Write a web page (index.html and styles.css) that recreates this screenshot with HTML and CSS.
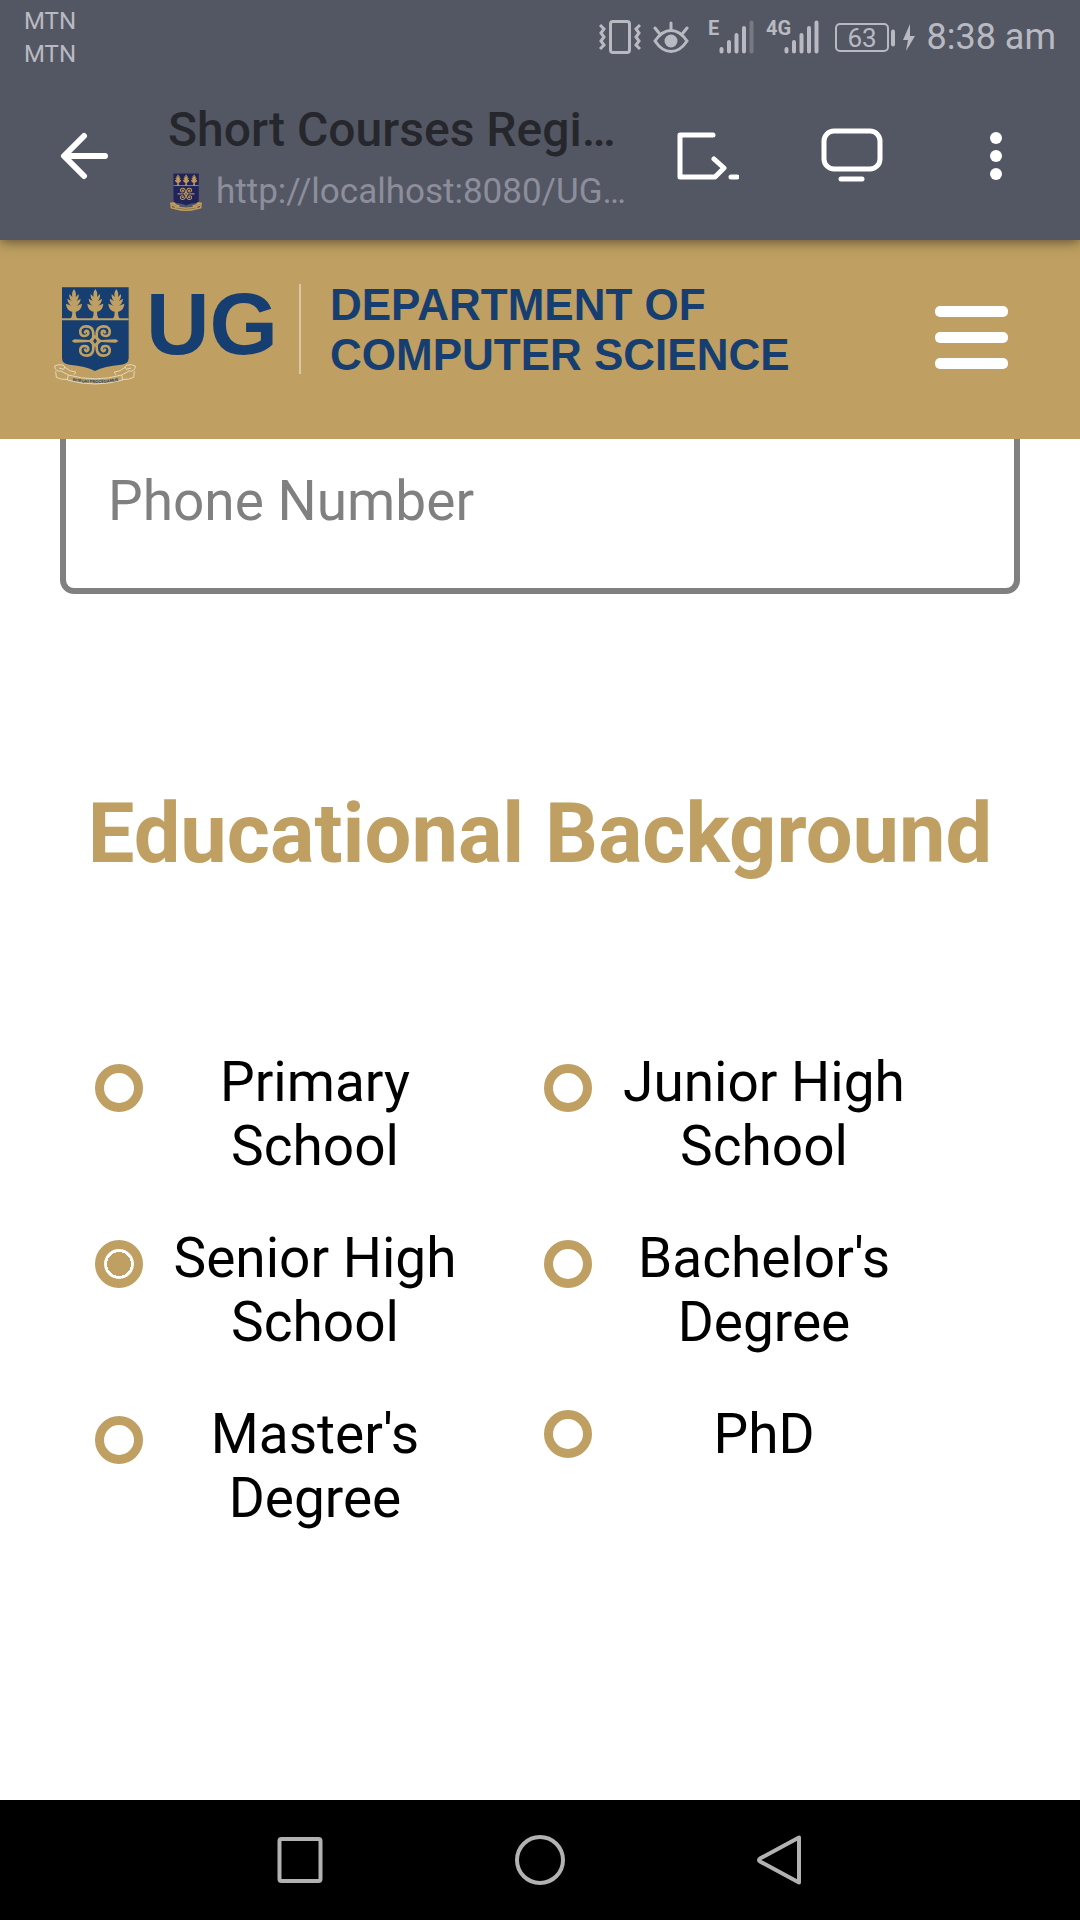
FILE: index.html
```html
<!DOCTYPE html>
<html lang="en">
<head>
<meta charset="utf-8">
<meta name="viewport" content="width=device-width, initial-scale=1">
<title>Short Courses Registration</title>
<link rel="stylesheet" href="styles.css">
</head>
<body>
<svg class="defs" aria-hidden="true">
  <symbol id="leaf" viewBox="-26 0 52 92">
    <path d="M0 0 C6 8 7 14 5 24 L14 15 C15 24 12 32 6 37 L20 29 C19 40 14 47 6 51 L24 44 C23 58 15 67 5 68 L6 80 Q8 88 14 92 H-14 Q-8 88 -6 80 L-5 68 C-15 67 -23 58 -24 44 L-6 51 C-14 47 -19 40 -20 29 L-6 37 C-12 32 -15 24 -14 15 L-5 24 C-7 14 -6 8 0 0Z"/>
  </symbol>
  <symbol id="crest" viewBox="39 48 246 300">
    <path class="crest-shield" d="M63 52H263V264Q263 282 240 284Q190 288 162 303Q134 288 86 284Q63 282 63 264Z"/>
    <g class="crest-charge">
      <use href="#leaf" x="73" y="57" width="52" height="92"/>
      <use href="#leaf" x="137" y="57" width="52" height="92"/>
      <use href="#leaf" x="200" y="57" width="52" height="92"/>
      <path d="M63 145H263V151H63Z"/>
      <path d="M92 213L100 208L145 210L162 194L180 210L224 208L233 213L224 218L180 216L162 232L145 216L100 218Z"/>
    </g>
    <g class="crest-scroll">
      <path d="M156 206C160 180 152 169 136 169C122 169 116 178 118 188C121 202 141 200 142 189C142 182 134 180 132 187"/>
      <path d="M168 206C164 180 172 169 188 169C202 169 208 178 206 188C203 202 183 200 182 189C182 182 190 180 192 187"/>
      <path d="M156 220C160 246 152 257 136 257C122 257 116 248 118 238C121 224 141 226 142 237C142 244 134 246 132 239"/>
      <path d="M168 220C164 246 172 257 188 257C202 257 208 248 206 238C203 224 183 226 182 237C182 244 190 246 192 239"/>
    </g>
    <path class="crest-eye" d="M162 205L168 213L162 221L156 213Z"/>
    <path class="crest-ribbon" d="M82 315Q162 338 242 315L245 330Q162 354 79 330Z M82 315L60 303Q42 306 41 288Q50 282 66 285Q76 290 68 298L54 294 M44 304L46 322Q60 330 79 328 M72 292L86 302L104 306L100 314 M242 315L264 303Q282 306 283 288Q274 282 258 285Q248 290 256 298L270 294 M280 304L278 322Q264 330 245 328 M252 292L238 302L220 306L224 314"/>
  </symbol>
</svg>

<div class="status-bar">
  <div class="carriers"><span>MTN</span><span>MTN</span></div>
  <div class="status-icons">
    <svg width="42" height="34" viewBox="0 0 42 34" fill="none" stroke="currentColor" stroke-width="3" aria-label="Vibrate">
      <rect x="11.500" y="1.500" width="19" height="31" rx="2.500"/>
      <path stroke-width="3" d="M1 5L5 9L2 13L5 17L2 21L5 25L1 29M41 5L37 9L40 13L37 17L40 21L37 25L41 29"/>
    </svg>
    <svg width="36" height="34" viewBox="0 0 36 34" fill="none" stroke="currentColor" stroke-width="3" stroke-linecap="round" aria-label="Eye comfort">
      <path d="M2 21Q9 10.500 18 10.500T34 21Q27 31.500 18 31.500T2 21Z"/>
      <path d="M18 10V3M6 13L2 8M30 13L34 8"/>
      <circle cx="18" cy="21" r="6.500" fill="currentColor" stroke="none"/>
    </svg>
    <svg width="53" height="50" viewBox="0 -8 53 50" aria-label="Signal, Edge">
      <text class="network" x="7" y="15">E</text>
      <path class="bars" d="M20.500 29V31.500M28 22V31.500M35.500 15V31.500M43 8V31.500"/>
      <path class="bars bars-off" d="M50.500 2.500V31.500"/>
    </svg>
    <svg width="53" height="50" viewBox="0 -8 53 50" aria-label="Signal, 4G">
      <text class="network" x="0" y="15">4G</text>
      <path class="bars" d="M20.500 29V31.500M28 22V31.500M35.500 15V31.500M43 8V31.500M50.500 2.500V31.500"/>
    </svg>
    <svg width="84" height="34" viewBox="0 0 84 34" aria-label="Battery charging">
      <rect x="5" y="4" width="52" height="27" rx="4" fill="none" stroke="currentColor" stroke-width="2"/>
      <path class="bars" d="M62 11.500V24.500"/>
      <path fill="currentColor" d="M79 4L72 20H77L75 31L84 16H79Z"/>
      <text class="charge" x="31" y="27" text-anchor="middle">63</text>
    </svg>
    <span class="clock">8:38 am</span>
  </div>
</div>

<div class="app-bar">
  <button class="back" type="button" aria-label="Back">
    <svg width="48" height="48" viewBox="0 0 48 48" fill="none" stroke="currentColor" stroke-width="6" stroke-linecap="round" stroke-linejoin="round"><path d="M24 4L4 24L24 44M5 24H45"/></svg>
  </button>
  <div class="page-info">
    <div class="page-title">Short Courses Regi…</div>
    <div class="page-url">
      <svg class="favicon" width="32" height="38" aria-hidden="true"><use href="#crest"/></svg>
      <span>http://localhost:8080/UG…</span>
    </div>
  </div>
  <div class="actions">
    <button class="action" type="button" aria-label="Console">
      <svg width="62" height="50" viewBox="0 0 62 50" fill="none" stroke="currentColor" stroke-width="5" stroke-linecap="round" stroke-linejoin="round"><path d="M36 4H3V46H38L47 37L37 28M54 46H60"/></svg>
    </button>
    <button class="action" type="button" aria-label="Desktop view">
      <svg width="62" height="56" viewBox="0 0 62 56" fill="none" stroke="currentColor" stroke-width="5" stroke-linecap="round"><rect x="3" y="3" width="56" height="38" rx="10"/><path d="M20 51H41"/></svg>
    </button>
    <button class="action" type="button" aria-label="More options">
      <svg width="12" height="48" viewBox="0 0 12 48" fill="currentColor"><circle cx="6" cy="6" r="6"/><circle cx="6" cy="24" r="6"/><circle cx="6" cy="42" r="6"/></svg>
    </button>
  </div>
</div>

<header class="site-header">
  <a class="logo" href="#">
    <svg class="logo-crest" width="82" height="100" viewBox="0 0 82 100" role="img" aria-label="University crest">
      <use href="#crest" width="82" height="100"/>
      <path id="motto-line" fill="none" d="M15 94Q41 100 68 94"/>
      <text class="motto"><textPath href="#motto-line" startOffset="50%" text-anchor="middle">INTEGRI PROCEDAMUS</textPath></text>
    </svg>
    <span class="logo-ug">UG</span>
    <span class="logo-dept">DEPARTMENT OF<br>COMPUTER SCIENCE</span>
  </a>
  <button class="menu" type="button" aria-label="Menu"><span></span><span></span><span></span></button>
</header>

<main class="form">
  <input class="field" type="tel" placeholder="Phone Number" aria-label="Phone Number">
  <h1 class="heading">Educational Background</h1>
  <div class="options" role="radiogroup" aria-label="Educational Background">
    <div class="option"><input type="radio" name="education" id="primary"><label for="primary">Primary School</label></div>
    <div class="option"><input type="radio" name="education" id="junior"><label for="junior">Junior High School</label></div>
    <div class="option"><input type="radio" name="education" id="senior" checked><label for="senior">Senior High School</label></div>
    <div class="option"><input type="radio" name="education" id="bachelor"><label for="bachelor">Bachelor's Degree</label></div>
    <div class="option"><input type="radio" name="education" id="master"><label for="master">Master's Degree</label></div>
    <div class="option option-short"><input type="radio" name="education" id="phd"><label for="phd">PhD</label></div>
  </div>
</main>

<nav class="system-nav" aria-label="System">
  <button type="button" aria-label="Recent apps"><svg width="50" height="50" viewBox="0 0 50 50"><rect x="4.500" y="4" width="41" height="42" rx="2"/></svg></button>
  <button type="button" aria-label="Home"><svg width="50" height="50" viewBox="0 0 50 50"><circle cx="25" cy="25" r="23"/></svg></button>
  <button type="button" aria-label="Back"><svg width="50" height="50" viewBox="0 0 50 50"><path d="M44 2.500V47.500L5 26.500Q3 25 5 23.500Z"/></svg></button>
</nav>
</body>
</html>
```
FILE: styles.css
```css
:root {
  --gold: #bfa062;
  --navy: #163e70;
  --slate: #535763;
}

* { box-sizing: border-box; }

body {
  margin: 0;
  min-height: 100vh;
  display: flex;
  flex-direction: column;
  background: #fff;
  color: #000;
  font-family: Roboto, sans-serif;
}

button {
  padding: 0;
  border: 0;
  background: none;
  color: inherit;
}

svg { display: block; flex: none; }

.defs { position: absolute; width: 0; height: 0; }

/* Status bar */
.status-bar {
  display: flex;
  justify-content: space-between;
  height: 72px;
  padding: 5px 24px 0;
  background: var(--slate);
  color: #b9bac1;
  position: relative;
  z-index: 3;
}

.carriers {
  display: flex;
  flex-direction: column;
  font-size: 24px;
  line-height: 33px;
}

.status-icons {
  display: flex;
  align-items: center;
  gap: 12px;
  height: 64px;
}

.network {
  font: bold 20px "Liberation Sans Narrow", Roboto, sans-serif;
  fill: currentColor;
}

.bars {
  fill: none;
  stroke: currentColor;
  stroke-width: 4;
  stroke-linecap: round;
}

.bars-off { opacity: .35; }

.charge { font-size: 26px; fill: currentColor; }

.clock { font-size: 36px; line-height: 48px; white-space: nowrap; }

/* Browser bar */
.app-bar {
  display: flex;
  align-items: center;
  height: 168px;
  padding: 0 12px 0 60px;
  background: var(--slate);
  color: #fff;
  position: relative;
  z-index: 2;
  box-shadow: 0 2px 12px rgba(0, 0, 0, .5);
}

.page-info {
  flex: 1;
  min-width: 0;
  margin-left: 60px;
  padding-top: 8px;
  white-space: nowrap;
}

.page-title {
  color: #26272c;
  font-size: 48px;
  font-weight: 500;
  line-height: 64px;
}

.page-url {
  display: flex;
  align-items: center;
  gap: 14px;
  padding-left: 2px;
  color: #8d8e9c;
  font-size: 35px;
  line-height: 60px;
}

.favicon {
  --shield: #20245a;
  --charge: #c39b58;
  --ribbon: #c39b58;
  --ribbon-width: 12;
}

.actions { display: flex; }

.action {
  display: flex;
  justify-content: center;
  align-items: center;
  width: 144px;
  height: 96px;
}

/* Site header */
.site-header {
  display: flex;
  justify-content: space-between;
  align-items: center;
  padding: 40px 72px 45px 54px;
  background: var(--gold);
  position: relative;
  z-index: 1;
}

.logo {
  --shield: var(--navy);
  --charge: var(--gold);
  --ribbon: #e5d9bd;
  --ribbon-width: 3;
  display: flex;
  align-items: flex-start;
  height: 114px;
  color: var(--navy);
  font-family: "Liberation Sans", sans-serif;
  font-weight: bold;
  text-decoration: none;
  white-space: nowrap;
}

.logo-crest { margin-top: 6px; }

.crest-shield { fill: var(--shield); }
.crest-charge { fill: var(--charge); }
.crest-scroll { fill: none; stroke: var(--charge); stroke-width: 8; stroke-linecap: round; }
.crest-eye { fill: var(--shield); }
.crest-ribbon { fill: none; stroke: var(--ribbon); stroke-width: var(--ribbon-width); }

.motto { font-size: 4px; fill: var(--navy); }

.logo-ug {
  margin-left: 10px;
  font-size: 88px;
  line-height: 88px;
}

.logo-dept {
  margin-left: 21px;
  padding-left: 31px;
  background: linear-gradient(#d9c8a1, #d9c8a1) 0 4px / 2px 90px no-repeat;
  font-size: 44px;
  line-height: 50px;
}

.menu {
  display: flex;
  flex-direction: column;
  gap: 15px;
}

.menu span {
  width: 73px;
  height: 11px;
  border-radius: 5px;
  background: #fff;
}

/* Registration form, scrolled beneath the header */
.form {
  flex: 1;
  padding: 0 60px 80px;
  text-align: center;
}

.field {
  display: block;
  width: 100%;
  height: 188px;
  margin-top: -33px;
  padding: 2px 42px 0;
  border: 6px solid #808080;
  border-radius: 14px;
  background: #fff;
  font: 55px Roboto, sans-serif;
}

.field::placeholder { color: #808080; opacity: 1; }

.heading {
  margin: 190px 0 166px;
  color: var(--gold);
  font-size: 83px;
  line-height: 100px;
}

.options {
  display: grid;
  grid-template-columns: 1fr 1fr;
  row-gap: 48px;
  padding: 0 27px 0 35px;
}

.option {
  display: flex;
  align-items: flex-start;
  font-size: 55px;
  line-height: 64px;
}

.option-short { align-items: center; height: 64px; }

.option input {
  appearance: none;
  flex: none;
  width: 48px;
  height: 48px;
  margin: 14px 0 0;
  border: 9px solid var(--gold);
  border-radius: 50%;
}

.option-short input { margin: 0; }

.option input:checked {
  background: radial-gradient(circle, var(--gold) 12px, #fff 12px);
}

.option label { width: 296px; margin-left: 24px; }

/* System navigation */
.system-nav {
  display: flex;
  justify-content: center;
  align-items: center;
  gap: 190px;
  height: 120px;
  background: #000;
}

.system-nav svg {
  fill: none;
  stroke: #b2b2b2;
  stroke-width: 4;
  stroke-linejoin: round;
}
```
